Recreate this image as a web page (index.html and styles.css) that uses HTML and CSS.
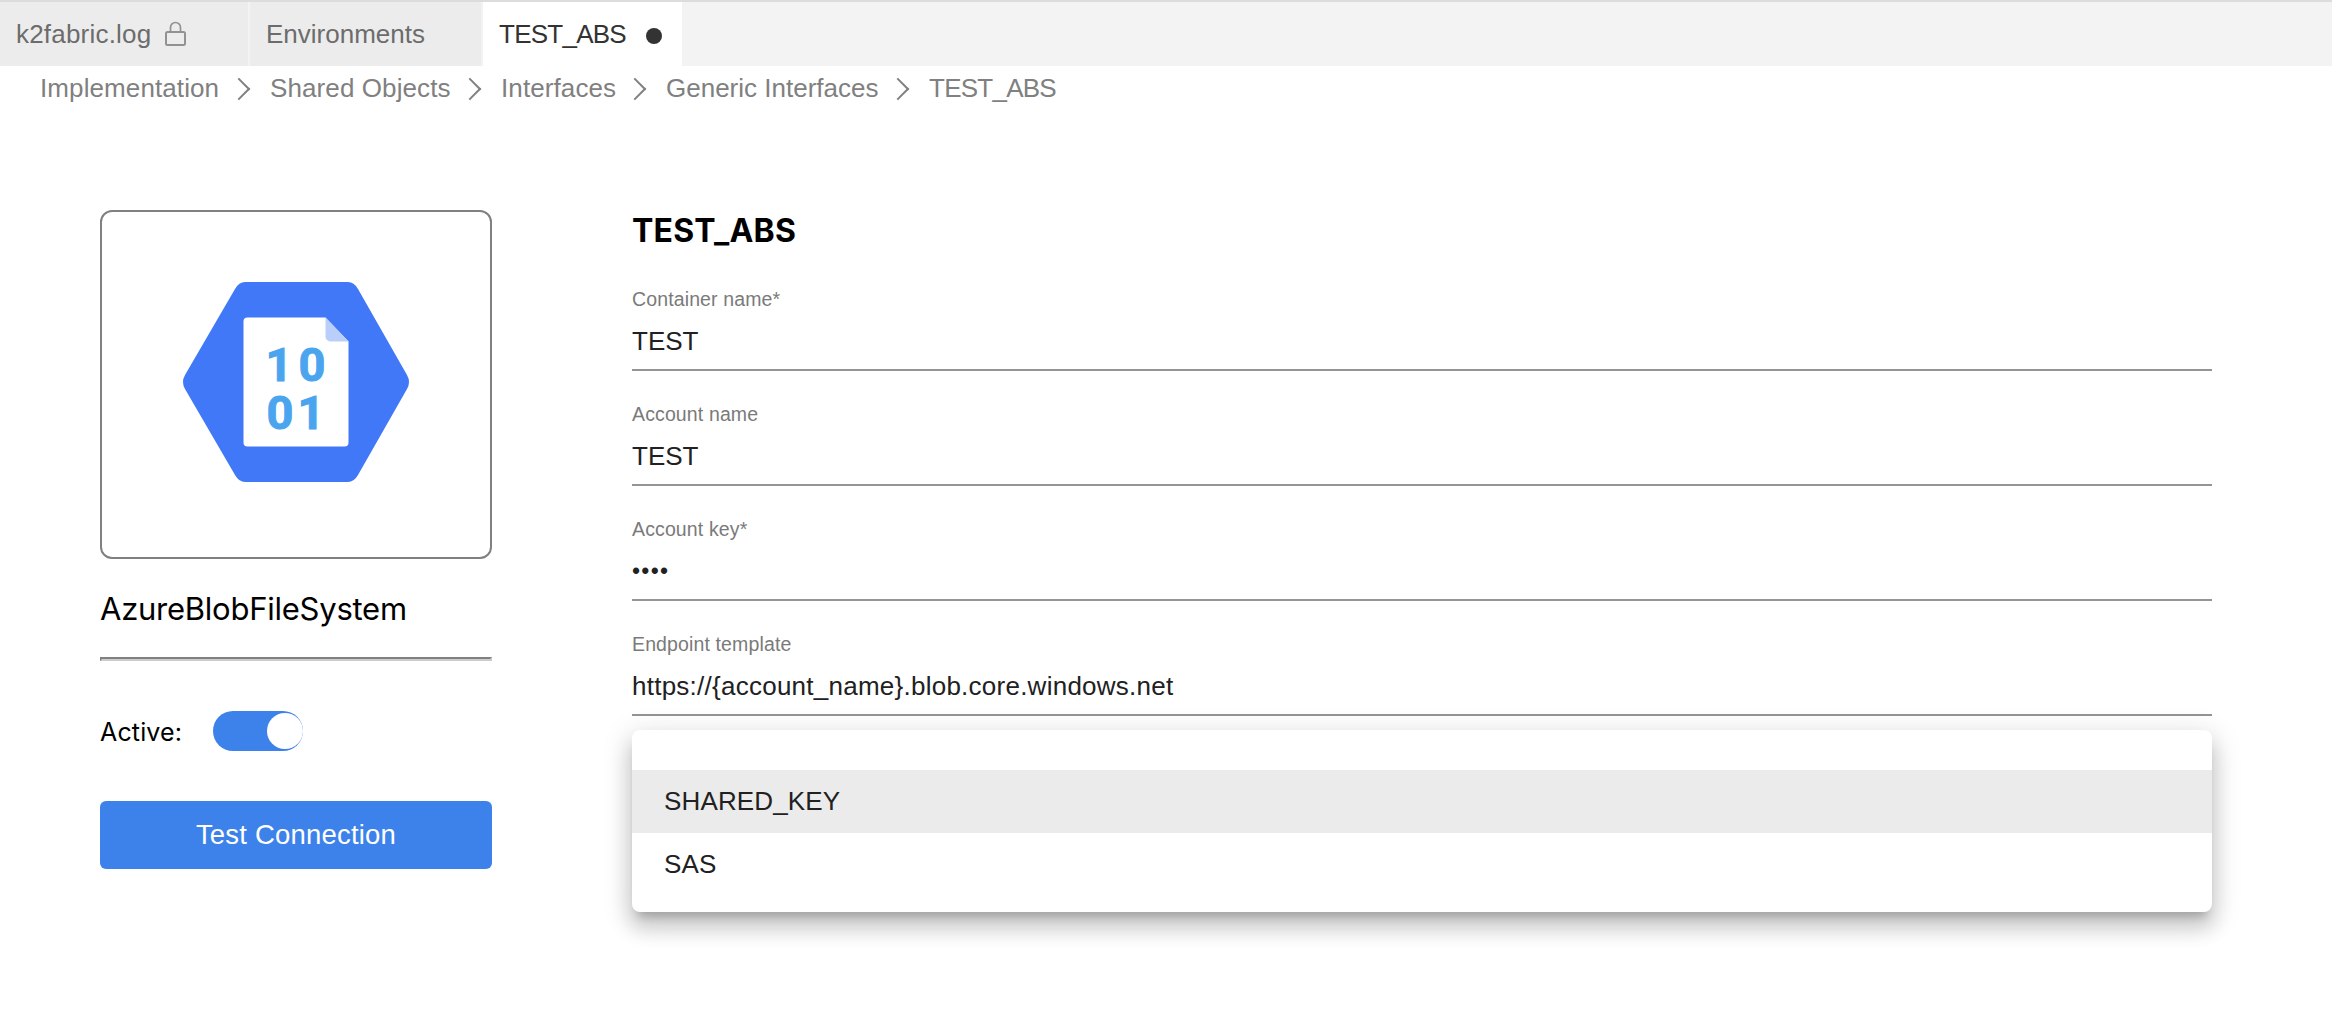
FILE: index.html
```html
<!DOCTYPE html>
<html lang="en">
<head>
<meta charset="utf-8">
<title>TEST_ABS</title>
<link rel="stylesheet" href="styles.css">
</head>
<body>
<nav class="tabs">
  <div class="tab tab-log">k2fabric.log
    <svg class="lock" width="22" height="26" viewBox="0 0 22 26" fill="none" stroke="#929292" stroke-width="2"><rect x="1" y="11" width="19" height="13" rx="1.5"/><path d="M5.5 11V6.5a5 5 0 0 1 10 0V11" stroke-width="1.7"/></svg>
  </div>
  <div class="tab tab-env">Environments</div>
  <div class="tab tab-active"><span class="abs">TEST_ABS</span><span class="dirty"></span></div>
</nav>
<nav class="crumbs">
  <span class="crumb c1">Implementation</span>
  <span class="crumb c2">Shared Objects</span>
  <span class="crumb c3">Interfaces</span>
  <span class="crumb c4">Generic Interfaces</span>
  <span class="crumb abs">TEST_ABS</span>
</nav>
<main class="content">
  <aside class="side">
    <div class="logo">
      <svg width="228" height="202" viewBox="182 281 228 202">
        <path fill="#4178f7" d="M245 282H348Q354 282 358 289L407 375Q411 382 407 389L358 475Q354 482 348 482H245Q239 482 235 475L185 389Q181 382 185 375L235 289Q239 282 245 282Z"/>
        <path fill="#fff" d="M247.500 317.500H325.500L348.500 341.500V442.500a4 4 0 0 1-4 4H247.500a4 4 0 0 1-4-4V321.500a4 4 0 0 1 4-4Z"/>
        <path fill="#b9cefb" d="M325.500 317.500L348.500 341.500H330.500a5 5 0 0 1-5-5Z"/>
        <g class="digits"><text x="265.500" y="381">1</text><text x="298.500" y="381">0</text><text x="266.500" y="428.500">0</text><text x="297.500" y="428.500">1</text></g>
      </svg>
    </div>
    <div class="type-name">AzureBlobFileSystem</div>
    <hr class="rule">
    <div class="active-row"><span class="active-label">Active:</span><span class="toggle"><span class="knob"></span></span></div>
    <button class="test-btn">Test Connection</button>
  </aside>
  <section class="form">
    <h1 class="title">TEST_ABS</h1>
    <div class="field"><label class="label">Container name*</label><div class="value">TEST</div></div>
    <div class="field"><label class="label">Account name</label><div class="value">TEST</div></div>
    <div class="field"><label class="label">Account key*</label><div class="value secret">••••</div></div>
    <div class="field"><label class="label">Endpoint template</label><div class="value url">https://{account_name}.blob.core.windows.net</div></div>
    <div class="menu">
      <div class="option selected">SHARED_KEY</div>
      <div class="option">SAS</div>
    </div>
  </section>
</main>
</body>
</html>
```
FILE: styles.css
```css
* { box-sizing: border-box; }
body {
  min-height: 1032px;
  margin: 0;
  background: #fff;
  color: #212121;
  font-family: "Liberation Sans", Arial, sans-serif;
  font-size: 26px;
}
.tabs {
  display: flex;
  height: 66px;
  border-top: 2px solid #dcdcdc;
  background: #f3f3f3;
}
.tab {
  display: flex;
  align-items: center;
  padding-left: 16px;
  background: #ececec;
  color: #6c6c6c;
  white-space: nowrap;
}
.tab-log { width: 248px; margin-right: 2px; letter-spacing: 0.2px; }
.tab-env { width: 231px; margin-right: 2px; }
.tab-active { width: 199px; background: #fff; color: #333; }
.abs { letter-spacing: -0.75px; }
.lock { margin: 0 0 1px 14px; }
.dirty {
  width: 16px;
  height: 16px;
  margin: 3px 0 0 20px;
  border-radius: 50%;
  background: #333;
}
.crumbs {
  display: flex;
  height: 44px;
  padding-left: 40px;
  color: #808080;
  line-height: 44px;
}
.crumb { display: flex; align-items: center; white-space: nowrap; }
.crumb:not(:last-child)::after {
  content: "";
  width: 14px;
  height: 14px;
  margin-top: 1px;
  border: solid #808080;
  border-width: 2px 2px 0 0;
  transform: translateX(-5px) rotate(45deg);
}
.crumb:not(:last-child) { justify-content: space-between; padding-right: 18px; }
.c1 { width: 230px; letter-spacing: 0.1px; }
.c2 { width: 231px; letter-spacing: 0.1px; }
.c3 { width: 165px; letter-spacing: 0.1px; }
.c4 { width: 263px; }
.content { display: flex; gap: 140px; padding: 100px 0 100px 100px; }
.side { width: 392px; color: #000; font-family: Inter, sans-serif; }
.logo {
  display: flex;
  align-items: center;
  justify-content: center;
  height: 349px;
  padding-bottom: 5px;
  border: 2px solid #808080;
  border-radius: 12px;
}
.digits { fill: #4ba5ee; stroke: #4ba5ee; stroke-width: 1px; font: 700 47px Roboto, sans-serif; }
.type-name { height: 98px; padding-top: 30px; font-size: 31px; line-height: 40px; letter-spacing: -0.25px; }
.rule {
  height: 4px;
  margin: 0;
  border: 2px solid;
  border-color: #808080 #ccc #ccc #808080;
}
.active-row { display: flex; align-items: center; height: 40px; margin-top: 50px; }
.active-label { width: 113px; padding-top: 2px; font-size: 25px; letter-spacing: 0.15px; }
.toggle { width: 90px; height: 40px; padding: 2px 0 0 54px; border-radius: 20px; background: #3d82ea; }
.knob { display: block; width: 36px; height: 36px; border-radius: 50%; background: #fff; }
.test-btn {
  width: 100%;
  height: 68px;
  margin-top: 50px;
  padding: 0;
  border: 0;
  border-radius: 6px;
  background: #3d82ea;
  color: #fff;
  font: 27.5px "Liberation Sans", Arial, sans-serif;
  letter-spacing: 0.2px;
}
.form { width: 1580px; }
.title {
  height: 46px;
  margin: 0;
  padding-top: 1px;
  color: #000;
  font: 700 32px/40px Inter, sans-serif;
  letter-spacing: 0.2px;
}
.field { height: 115px; padding-top: 31px; border-bottom: 2px solid #949494; }
.label { display: block; color: #7a7a7a; font-size: 19.500px; line-height: 24px; letter-spacing: 0.13px; }
.value { margin-top: 15px; line-height: 30px; }
.secret { font-size: 23px; letter-spacing: 1.300px; }
.url { letter-spacing: 0.25px; }
.menu {
  height: 182px;
  margin-top: 14px;
  padding-top: 40px;
  border-radius: 8px;
  background: #fff;
  box-shadow: 0 10px 10px -6px rgba(0,0,0,.2), 0 16px 20px 2px rgba(0,0,0,.14), 0 6px 28px 4px rgba(0,0,0,.12);
}
.option { height: 63px; padding-left: 32px; line-height: 62px; letter-spacing: 0.15px; }
.selected { background: #ebebeb; }
```
